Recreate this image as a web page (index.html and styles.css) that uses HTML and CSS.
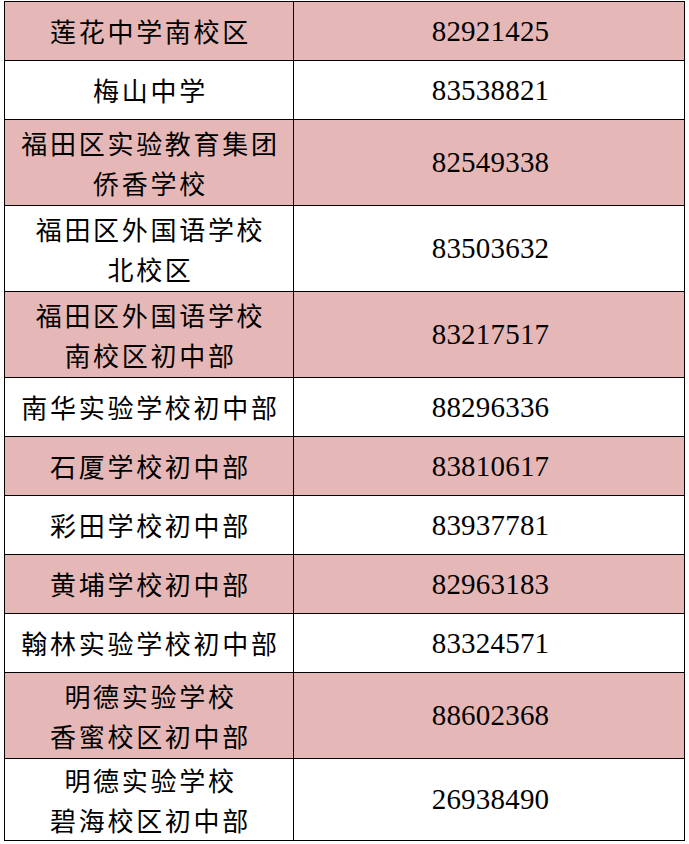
FILE: index.html
```html
<!DOCTYPE html>
<html lang="zh">
<head>
<meta charset="utf-8">
<title>学校电话</title>
<link rel="stylesheet" href="styles.css">
</head>
<body>
<table class="schools">
  <tbody>
    <tr class="single pink"><td class="name">莲花中学南校区</td><td class="tel">82921425</td></tr>
    <tr class="single"><td class="name">梅山中学</td><td class="tel">83538821</td></tr>
    <tr class="double pink"><td class="name">福田区实验教育集团<br>侨香学校</td><td class="tel">82549338</td></tr>
    <tr class="double"><td class="name">福田区外国语学校<br>北校区</td><td class="tel">83503632</td></tr>
    <tr class="double pink"><td class="name">福田区外国语学校<br>南校区初中部</td><td class="tel">83217517</td></tr>
    <tr class="single"><td class="name">南华实验学校初中部</td><td class="tel">88296336</td></tr>
    <tr class="single pink"><td class="name">石厦学校初中部</td><td class="tel">83810617</td></tr>
    <tr class="single"><td class="name">彩田学校初中部</td><td class="tel">83937781</td></tr>
    <tr class="single pink"><td class="name">黄埔学校初中部</td><td class="tel">82963183</td></tr>
    <tr class="single"><td class="name">翰林实验学校初中部</td><td class="tel">83324571</td></tr>
    <tr class="double pink"><td class="name">明德实验学校<br>香蜜校区初中部</td><td class="tel">88602368</td></tr>
    <tr class="double last"><td class="name">明德实验学校<br>碧海校区初中部</td><td class="tel">26938490</td></tr>
  </tbody>
</table>
</body>
</html>
```
FILE: styles.css
```css
html, body {
  margin: 0;
  padding: 0;
  background: #ffffff;
}

body {
  padding: 1px 0 0 4px;
}

.schools {
  border-collapse: collapse;
  width: 681px;
  table-layout: fixed;
  color: #000;
}

.schools td {
  border: 1px solid #000;
  padding: 0;
  text-align: center;
  vertical-align: middle;
}

.schools .name {
  width: 285px;
  font-family: "Noto Sans CJK SC", "Noto Sans", sans-serif;
  font-size: 26px;
  line-height: 40px;
  letter-spacing: 2.7px;
  padding-left: 3px;
}

.schools .tel {
  font-family: "Liberation Serif", "Times New Roman", serif;
  font-size: 29px;
  letter-spacing: 0.2px;
  padding-left: 3px;
}

.single {
  height: 59px;
}

.double {
  height: 86px;
}

.double.last {
  height: 82px;
}

.pink td {
  background: #e5b8b7;
}
```
